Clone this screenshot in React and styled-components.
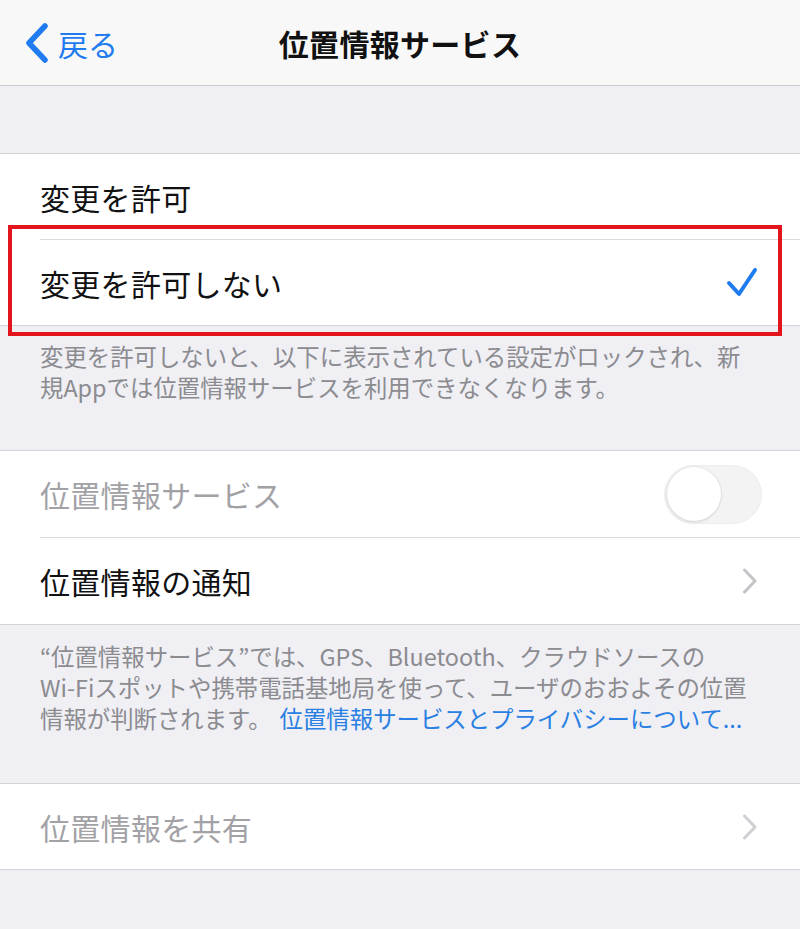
import React from 'react'
import styled, { createGlobalStyle } from 'styled-components'

const GlobalStyle = createGlobalStyle`
  html, body {
    margin: 0;
    padding: 0;
    background: #efeff4;
  }
  body {
    font-family: "Noto Sans CJK JP", "Noto Sans", sans-serif;
    -webkit-font-smoothing: antialiased;
  }
`

const Page = styled.div`
  width: 800px;
  min-height: 929px;
  background: #efeff4;
  display: flex;
  flex-direction: column;
`

const NavBar = styled.header`
  height: 85px;
  background: #f8f8f8;
  border-bottom: 1px solid #c9c9cc;
  display: grid;
  grid-template-columns: 1fr auto 1fr;
  align-items: center;
`

const BackButton = styled.div`
  display: flex;
  align-items: center;
  gap: 9px;
  padding-left: 25px;
  color: #1f7bf0;
  font-size: 30px;
  line-height: 1;
`

const Title = styled.h1`
  margin: 0;
  font-size: 30px;
  font-weight: 700;
  color: #111;
  letter-spacing: 0.3px;
`

const TopGap = styled.div`
  height: 67px;
`

const Section = styled.section`
  background: #fff;
  border-top: 1px solid #d4d4d8;
  border-bottom: 1px solid #d4d4d8;
`

const RowWrap = styled.div`
  position: relative;
`

const Row = styled.div`
  height: ${(p) => p.$height || 85}px;
  display: flex;
  align-items: center;
  justify-content: space-between;
  padding: 0 42px 0 40px;
`

const RowLabel = styled.span`
  font-size: 30px;
  color: ${(p) => (p.$disabled ? '#a2a2a6' : '#111')};
  letter-spacing: 0.3px;
`

const Divider = styled.div`
  height: 1px;
  margin-left: 40px;
  background: #dcdce0;
`

const Highlight = styled.div`
  position: absolute;
  top: -15px;
  bottom: -11px;
  left: 8px;
  right: 18px;
  border: 4px solid #e3141c;
  pointer-events: none;
`

const Footer = styled.div`
  height: ${(p) => p.$height}px;
  box-sizing: border-box;
  padding: ${(p) => p.$top}px 20px 0 40px;
  font-size: 23.4px;
  line-height: 31px;
  color: #8b8b90;
`

const FooterLine = styled.div`
  white-space: nowrap;
`

const Link = styled.span`
  color: #2a7fe2;
  margin-left: 8px;
`

const Track = styled.div`
  width: 98px;
  height: 59px;
  box-sizing: border-box;
  border-radius: 30px;
  background: #f3f3f4;
  border: 1px solid #ededef;
  display: flex;
  align-items: center;
  padding-left: 2px;
  margin-right: -4px;
`

const Knob = styled.div`
  width: 54px;
  height: 54px;
  border-radius: 50%;
  background: #fff;
  box-shadow: 0 1px 3px rgba(0, 0, 0, 0.12), 0 0 0 1px rgba(0, 0, 0, 0.03);
`

const Chevron = ({ color = '#c4c4c8' }) => (
  <svg width="16" height="26" viewBox="0 0 16 26" fill="none">
    <path d="M2.5 2 L13 13 L2.5 24" stroke={color} strokeWidth="3" strokeLinecap="round" strokeLinejoin="round" />
  </svg>
)

const BackChevron = () => (
  <svg width="24" height="40" viewBox="0 0 24 40" fill="none">
    <path d="M20 3 L4 20 L20 37" stroke="#1f7bf0" strokeWidth="5.5" strokeLinecap="round" strokeLinejoin="round" />
  </svg>
)

const Check = () => (
  <svg width="32" height="32" viewBox="0 0 32 32" fill="none">
    <path d="M3 16 L13 27 L29 3" stroke="#1f7bf0" strokeWidth="4" strokeLinecap="round" strokeLinejoin="round" />
  </svg>
)

export default function App() {
  return (
    <>
      <GlobalStyle />
      <Page>
        <NavBar>
          <BackButton>
            <BackChevron />
            <span>戻る</span>
          </BackButton>
          <Title>位置情報サービス</Title>
          <div />
        </NavBar>

        <TopGap />

        <Section>
          <Row>
            <RowLabel>変更を許可</RowLabel>
          </Row>
          <Divider />
          <RowWrap>
            <Row>
              <RowLabel>変更を許可しない</RowLabel>
              <Check />
            </Row>
            <Highlight />
          </RowWrap>
        </Section>

        <Footer $height={124} $top={15}>
          <FooterLine>変更を許可しないと、以下に表示されている設定がロックされ、新</FooterLine>
          <FooterLine>規Appでは位置情報サービスを利用できなくなります。</FooterLine>
        </Footer>

        <Section>
          <Row $height={86}>
            <RowLabel $disabled>位置情報サービス</RowLabel>
            <Track>
              <Knob />
            </Track>
          </Row>
          <Divider />
          <Row $height={86}>
            <RowLabel>位置情報の通知</RowLabel>
            <Chevron />
          </Row>
        </Section>

        <Footer $height={158} $top={16}>
          <FooterLine>“位置情報サービス”では、GPS、Bluetooth、クラウドソースの</FooterLine>
          <FooterLine>Wi-Fiスポットや携帯電話基地局を使って、ユーザのおおよその位置</FooterLine>
          <FooterLine>
            情報が判断されます。<Link>位置情報サービスとプライバシーについて...</Link>
          </FooterLine>
        </Footer>

        <Section>
          <Row>
            <RowLabel $disabled>位置情報を共有</RowLabel>
            <Chevron color="#d0d0d4" />
          </Row>
        </Section>
      </Page>
    </>
  )
}
